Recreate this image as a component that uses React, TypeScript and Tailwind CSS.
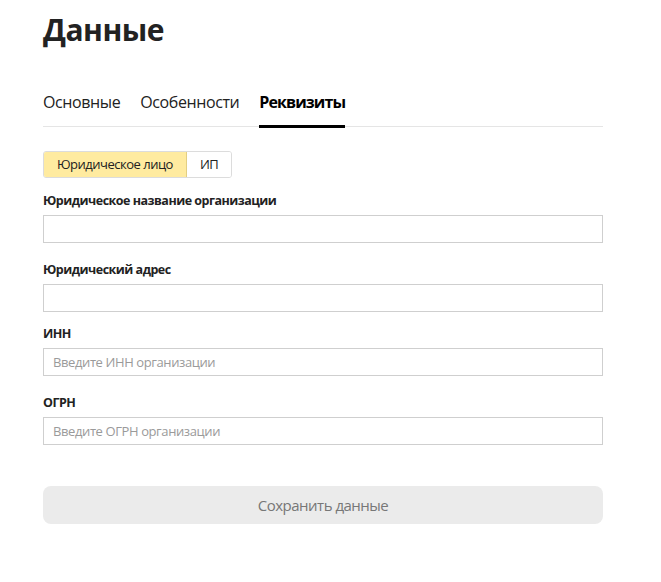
import { useState } from 'react';

const fields = [
    { label: 'Юридическое название организации', placeholder: '', gap: 'mt-[14px]' },
    { label: 'Юридический адрес', placeholder: '', gap: 'mt-[18px]' },
    { label: 'ИНН', placeholder: 'Введите ИНН организации', gap: 'mt-[13px]' },
    { label: 'ОГРН', placeholder: 'Введите ОГРН организации', gap: 'mt-[18px]' },
];

export default function App() {
    const [tab, setTab] = useState('Реквизиты');
    const [kind, setKind] = useState<'ul' | 'ip'>('ul');

    return (
        <div className="min-h-[582px] bg-white font-['Open_Sans',sans-serif] text-[#222]">
            <div className="w-[560px] ml-[43px] pt-[10px]">
                <h1 className="text-[30px] leading-[40px] font-bold tracking-[-0.5px] text-[#222]">Данные</h1>

                <div className="mt-[41px] flex gap-[20px] border-b border-[#e5e5e5]">
                    {['Основные', 'Особенности', 'Реквизиты'].map(t => (
                        <button
                            key={t}
                            onClick={() => setTab(t)}
                            className={`pb-[12px] text-[16px] leading-[22px] border-b-[3px] -mb-[2px] ${tab === t ? 'font-bold text-black border-black tracking-[-0.9px]' : 'text-[#222] border-transparent tracking-[-0.4px]'}`}
                        >
                            {t}
                        </button>
                    ))}
                </div>

                <div className="mt-[24px] inline-flex h-[27px] rounded-[3px] border border-[#dcdcdc] overflow-hidden text-[13px] leading-[25px] tracking-[-0.5px]">
                    <button
                        onClick={() => setKind('ul')}
                        className={`px-[13px] ${kind === 'ul' ? 'bg-[#ffeba0] border-r border-[#e3cf83]' : 'bg-white'}`}
                    >
                        Юридическое лицо
                    </button>
                    <button
                        onClick={() => setKind('ip')}
                        className={`px-[13px] ${kind === 'ip' ? 'bg-[#ffeba0]' : 'bg-white'}`}
                    >
                        ИП
                    </button>
                </div>

                <div className="flex flex-col">
                    {fields.map(f => (
                        <label key={f.label} className={`flex flex-col ${f.gap}`}>
                            <span className="text-[12.5px] leading-[18px] font-bold text-[#222] tracking-[-0.5px]">{f.label}</span>
                            <input
                                placeholder={f.placeholder}
                                className="mt-[5px] h-[28px] border border-[#cfcfcf] px-[9px] text-[13px] tracking-[-0.4px] outline-none placeholder:text-[#9a9a9a]"
                            />
                        </label>
                    ))}
                </div>

                <button className="mt-[41px] w-full h-[38px] rounded-[8px] bg-[#ebebeb] text-[15px] text-[#777] tracking-[-0.5px]">
                    Сохранить данные
                </button>
            </div>
        </div>
    );
}
